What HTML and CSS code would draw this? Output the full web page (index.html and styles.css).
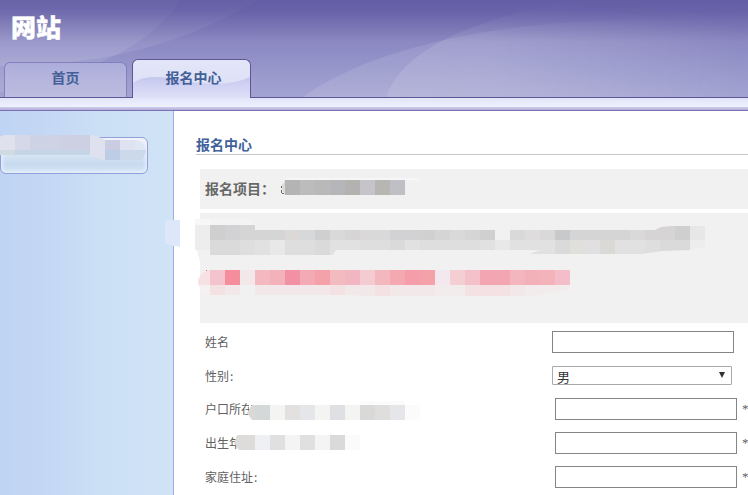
FILE: index.html
```html
<!DOCTYPE html>
<html lang="zh-CN">
<head>
<meta charset="utf-8">
<title>网站</title>
<link rel="stylesheet" href="styles.css">
</head>
<body>
<header class="header">
  <svg class="waves" width="748" height="97" viewBox="0 0 748 97" aria-hidden="true">
    <defs>
      <linearGradient id="up" gradientUnits="userSpaceOnUse" x1="0" y1="8" x2="0" y2="60"><stop offset="0" stop-color="#fff" stop-opacity=".02"/><stop offset="1" stop-color="#fff" stop-opacity=".1"/></linearGradient>
      <linearGradient id="side" gradientUnits="userSpaceOnUse" x1="380" y1="0" x2="748" y2="0"><stop offset="0" stop-color="#fff" stop-opacity=".11"/><stop offset=".3" stop-color="#fff" stop-opacity=".1"/><stop offset="1" stop-color="#fff" stop-opacity="0"/></linearGradient>
      <linearGradient id="fade" gradientUnits="userSpaceOnUse" x1="0" y1="8" x2="0" y2="42"><stop offset="0" stop-color="#fff" stop-opacity=".15"/><stop offset="1" stop-color="#fff"/></linearGradient>
      <mask id="m"><rect width="748" height="97" fill="url(#fade)"/></mask>
    </defs>
    <path fill="url(#up)" d="M0 0H180Q153 41 98 63Q50 82 0 92Z"/>
    <path fill="url(#up)" d="M0 0H258Q170 52 70 62Q35 66 0 66Z"/>
    <g mask="url(#m)">
      <path fill="url(#side)" d="M303 97C350 63 420 42 498 30C580 18 665 17 748 23V97Z"/>
      <path fill="url(#side)" d="M386 97C399 61 440 36 498 19C540 5 560 2 580 0H748V97Z"/>
    </g>
  </svg>
  <h1 class="site">网站</h1>
  <nav class="tabs">
    <a class="tab">首页</a>
    <a class="tab active">
      <svg class="gloss" width="117" height="39" viewBox="0 0 117 39" aria-hidden="true"><defs><linearGradient id="g" x1="0" y1="0" x2="0" y2="1"><stop offset="0" stop-color="#c5c8ee"/><stop offset="1" stop-color="#e0e2f8"/></linearGradient></defs><path fill="url(#g)" d="M0 23C14 14 32 17 52 21C78 26 103 24 117 17V39H0Z"/></svg>
      <span>报名中心</span>
    </a>
  </nav>
</header>
<div class="strip"></div>
<div class="body">
  <aside class="side"><div class="side-item"></div></aside>
  <main class="main">
    <h2 class="title">报名中心</h2>
    <div class="project">报名项目：</div>
    <div class="notice"></div>
    <form class="form">
      <div class="row"><label>姓名</label><input type="text"></div>
      <div class="row pick"><label>性别<em>:</em></label><div class="select"><span>男</span><i></i></div></div>
      <div class="row wide"><label>户口所在</label><input type="text"><b>*</b></div>
      <div class="row wide"><label>出生年</label><input type="text"><b>*</b></div>
      <div class="row wide"><label>家庭住址<em>:</em></label><input type="text"><b>*</b></div>
    </form>
  </main>
</div>
<svg class="mosaic" width="748" height="495" viewBox="0 0 748 495" shape-rendering="crispEdges" aria-hidden="true">
  <defs>
    <clipPath id="c1"><path d="M0 137Q2 135 5 135H90Q97 135 101 138L106 140H137Q145 143 146 150Q145 157 141 160H103L90 155H0Z"/></clipPath>
    <clipPath id="c2"><path d="M195 219H250L255 225V230H655L661 227L671 226H705V247L690 250L662 251L642 254H530L540 250H336L333 255H210V250H195Z"/></clipPath>
    <clipPath id="c3"><path d="M210 270H570V289L550 293L535 296H365L350 295H208Q198 292 198 280Q201 272 210 270Z"/></clipPath>
    <clipPath id="c4"><path d="M252 405H420V420H252L247 413Z"/></clipPath>
    <clipPath id="c5"><path d="M237 435H360V450H239L234 443Z"/></clipPath>
  </defs>
  <g clip-path="url(#c1)">
    <path fill="#dfe2ed" d="M0 135h15v15H0z"/><path fill="#d5d8e8" d="M15 135h15v15H15z"/><path fill="#cdd2e5" d="M30 135h30v15H30z"/><path fill="#cdd0e3" d="M60 135h30v15H60z"/><path fill="#dfe2ee" d="M90 135h15v25H90z"/>
    <path fill="#d0dae3" d="M0 150h15v5H0z"/><path fill="#c5d4e6" d="M15 150h75v5H15z"/>
    <path fill="#cacde2" d="M105 140h15v10h-15z"/><path fill="#dfe2f0" d="M120 135h15v15h-15z"/><path fill="#dfe7f3" d="M135 135h15v15h-15z"/><path fill="#bdcde5" d="M105 150h15v10h-15z"/><path fill="#cbd9ea" d="M120 150h30v10h-30z"/>
  </g>
  <path fill="#dce8fa" d="M165 221L168 220H180V247L165 244Z"/>
  <path fill="#dbdbd8" d="M285 180L281 187L285 195Z"/><path fill="#f6f6f6" d="M284 180L290 178H415L422 180Z"/>
  <path fill="#b4b4b4" d="M285 180h15v15h-15z"/><path fill="#bcbcbc" d="M300 180h15v15h-15z"/><path fill="#b9b9b9" d="M315 180h15v15h-15z"/><path fill="#b5b6b9" d="M330 180h15v15h-15z"/><path fill="#b3b2b1" d="M345 180h15v15h-15z"/><path fill="#c5c5c9" d="M360 180h15v15h-15z"/><path fill="#b8b6b3" d="M375 180h15v15h-15z"/><path fill="#bfc0c6" d="M390 180h15v15h-15z"/>
  <path fill="#6b665e" d="M281 186h1v2h-1zM281 190h1v3h-1zM282 193h2v1h-2z"/>
  <path fill="#f1f1f1" d="M197 250h13v16h-9z"/>
  <g clip-path="url(#c2)">
    <path fill="#f7f7f7" d="M195 219h15v6h-15z"/><path fill="#f4f4f4" d="M210 219h45v6h-45z"/><path fill="#ededed" d="M195 225h15v25h-15z"/>
    <path fill="#cfcfcf" d="M210 225h15v15h-15zM315 230h15v10h-15zM675 226h15v14h-15z"/>
    <path fill="#d2d2d4" d="M225 225h15v15h-15zM390 230h30v10h-30z"/>
    <path fill="#d5d5d5" d="M240 225h45v15h-45zM435 230h15v10h-15zM465 230h15v10h-15zM570 230h60v10h-60z"/>
    <path fill="#dcd8d7" d="M285 230h15v10h-15z"/><path fill="#d6d8da" d="M300 230h15v10h-15z"/>
    <path fill="#d9d9d9" d="M330 230h15v10h-15zM360 230h30v10h-30zM450 230h15v10h-15zM510 230h15v10h-15zM540 230h15v10h-15zM630 230h15v10h-15z"/>
    <path fill="#d6d4d4" d="M345 230h15v10h-15zM645 226h30v14h-30z"/><path fill="#d0d0d1" d="M420 230h15v10h-15zM480 230h15v10h-15z"/>
    <path fill="#dfdcdd" d="M525 230h15v10h-15z"/><path fill="#c8c9ca" d="M555 230h15v10h-15z"/><path fill="#e7e7e7" d="M690 226h15v14h-15z"/>
    <path fill="#dadada" d="M210 240h30v15h-30zM315 240h15v15h-15zM390 240h15v15h-15zM555 240h15v15h-15zM660 240h30v15h-30z"/>
    <path fill="#dedede" d="M240 240h15v15h-15zM285 240h30v15h-30zM360 240h30v15h-30zM420 240h60v15h-60zM645 240h15v15h-15z"/>
    <path fill="#e1e1e1" d="M255 240h15v15h-15zM330 240h30v15h-30zM405 240h15v15h-15zM480 240h15v15h-15zM510 240h45v15h-45zM615 240h30v15h-30z"/>
    <path fill="#e8e8e8" d="M270 240h15v15h-15zM495 240h15v15h-15z"/><path fill="#e0dfdc" d="M570 240h15v15h-15z"/><path fill="#e0e0e3" d="M585 240h15v15h-15z"/><path fill="#dad9d6" d="M600 240h15v15h-15z"/><path fill="#ededed" d="M690 240h15v15h-15z"/>
  </g>
  <g clip-path="url(#c3)">
    <path fill="#f7e1e5" d="M195 270h15v15h-15z"/><path fill="#f4c4ce" d="M210 270h15v15h-15z"/><path fill="#f58d9d" d="M225 270h15v15h-15z"/><path fill="#f3e8e9" d="M240 270h15v15h-15z"/><path fill="#f4b8c0" d="M255 270h15v15h-15z"/><path fill="#f3b2ba" d="M270 270h15v15h-15z"/><path fill="#f291a3" d="M285 270h15v15h-15z"/><path fill="#f3aab5" d="M300 270h15v15h-15z"/><path fill="#f4a1aa" d="M315 270h15v15h-15z"/><path fill="#f3bac0" d="M330 270h15v15h-15z"/><path fill="#f2b6c2" d="M345 270h15v15h-15z"/><path fill="#f3cbd0" d="M360 270h15v15h-15z"/><path fill="#f3b7be" d="M375 270h15v15h-15z"/><path fill="#f4a9b0" d="M390 270h15v15h-15z"/><path fill="#f59dab" d="M405 270h15v15h-15z"/><path fill="#f5a1aa" d="M420 270h15v15h-15z"/><path fill="#f3e8ee" d="M435 270h15v15h-15z"/><path fill="#f3ced3" d="M450 270h15v15h-15z"/><path fill="#f4c0ca" d="M465 270h15v15h-15z"/><path fill="#f3a6b2" d="M480 270h30v15h-30z"/><path fill="#f3b5be" d="M510 270h15v15h-15z"/><path fill="#f4b0b8" d="M525 270h15v15h-15z"/><path fill="#f4b3ba" d="M540 270h15v15h-15z"/><path fill="#f3bdca" d="M555 270h15v15h-15z"/>
    <path fill="#f5f1f2" d="M195 285h15v11h-15z"/><path fill="#f3e1e4" d="M210 285h15v11h-15zM330 285h15v11h-15zM375 285h15v11h-15zM465 285h45v11h-45z"/><path fill="#f3e8e9" d="M225 285h15v11h-15zM255 285h75v11h-75zM345 285h30v11h-30zM390 285h45v11h-45zM510 285h15v11h-15z"/><path fill="#f2eced" d="M435 285h30v11h-30zM525 285h45v11h-45z"/>
  </g>
  <path fill="#ee6040" d="M206 270h1v1h-1z"/>
  <path fill="#fbfbfb" d="M255 402h15v3h-15zM360 401h45v4h-45z"/>
  <g clip-path="url(#c4)">
    <path fill="#dad9d7" d="M245 405h10v15h-10z"/><path fill="#d4d8d9" d="M255 405h15v15h-15z"/><path fill="#f4f4f3" d="M270 405h15v15h-15zM315 405h15v15h-15zM345 405h15v15h-15z"/><path fill="#e3e1df" d="M285 405h15v15h-15z"/><path fill="#e4e6e9" d="M300 405h15v15h-15zM390 405h15v15h-15z"/><path fill="#dfe0e3" d="M330 405h15v15h-15z"/><path fill="#d9d9da" d="M360 405h15v15h-15z"/><path fill="#dfdedc" d="M375 405h15v15h-15z"/><path fill="#fbfbfb" d="M405 405h15v15h-15z"/>
  </g>
  <path fill="#fff" d="M249 400h6v5h-4l-2 5z"/>
  <g clip-path="url(#c5)">
    <path fill="#dddcda" d="M234 435h21v15h-21z"/><path fill="#eff0f3" d="M255 435h15v15h-15z"/><path fill="#e0e0e0" d="M270 435h15v15h-15zM300 435h15v15h-15z"/><path fill="#f4f4f4" d="M285 435h15v15h-15zM315 435h15v15h-15z"/><path fill="#dadada" d="M330 435h15v15h-15z"/><path fill="#fbfbfb" d="M345 435h15v15h-15z"/>
  </g>
</svg>
</body>
</html>
```

FILE: styles.css
```css
* { box-sizing: border-box; }
body {
  margin: 0;
  width: 748px;
  height: 495px;
  overflow: hidden;
  position: relative;
  background: #fff;
  color: #606060;
  font: 12px/18px "Noto Sans CJK SC", sans-serif;
}
.header {
  position: relative;
  height: 98px;
  padding: 9px 4px 0;
  border-bottom: 1px solid #5d5697;
  background: linear-gradient(#625da5 0, #6864aa 12px, #7d79b7 30px, #8b88c2 42px, #9191c8 58px, #a4a4d2 97px);
}
.waves { position: absolute; left: 0; top: 0; }
.site {
  position: relative;
  height: 50px;
  margin: 0 0 0 7px;
  color: #fff;
  font-size: 25px;
  line-height: 35px;
  font-weight: 900;
  -webkit-text-stroke: .4px #fff;
}
.tabs {
  position: relative;
  display: flex;
  align-items: flex-end;
  gap: 5px;
  height: 38px;
}
.tab {
  width: 123px;
  height: 35px;
  padding-top: 4px;
  border: 1px solid #8280bd;
  border-bottom: 0;
  border-radius: 6px 6px 0 0;
  background: linear-gradient(#adaddb, #bdbde1);
  color: #446096;
  font-size: 14px;
  line-height: 20px;
  font-weight: 700;
  text-align: center;
}
.tab.active {
  position: relative;
  width: 119px;
  height: 39px;
  margin-bottom: -1px;
  padding: 7px 0 0 4px;
  border-color: #5d5697;
  background: linear-gradient(#e3e6f8, #dcdff5);
  overflow: hidden;
}
.gloss { position: absolute; left: 0; top: 0; }
.tab.active span { position: relative; }
.strip {
  height: 13px;
  border-bottom: 1px solid #7c70b2;
  background: linear-gradient(#e2e5f9 0, #f0f1fe 9px, #c9c9e7 9px, #c9c9e7 10px, #b7b4dc 11px, #b7b4dc 12px);
}
.body { display: flex; height: 384px; }
.side {
  width: 174px;
  flex: none;
  padding-top: 26px;
  border-right: 1px solid #9bb0e8;
  background: linear-gradient(90deg, #bfd3f4, #c5d9f5 55px, #cce0f5 110px, #d0e3f7);
}
.side-item {
  width: 148px;
  height: 37px;
  border: 1px solid #929fda;
  border-radius: 6px;
  background: linear-gradient(#f5f0fa 0, #dce8f5 14px, #c7daf0 26px, #d4e4f6);
  box-shadow: inset 0 0 4px 1px #edf4fd;
}
.main { flex: 1; min-width: 0; padding: 24px 0 0 22px; }
.title {
  height: 20px;
  margin: 0;
  border-bottom: 1px solid #c5c5c5;
  color: #41619d;
  font-size: 14px;
  line-height: 18px;
  font-weight: 700;
}
.project {
  height: 40px;
  margin: 14px 0 4px 4px;
  padding-left: 5px;
  background: #f1f1f1;
  color: #686868;
  font-size: 14px;
  line-height: 39px;
  font-weight: 700;
}
.notice { height: 110px; margin-left: 4px; background: #f1f1f1; }
.form { margin: 2px 0 0 9px; }
.row { display: flex; align-items: center; height: 34px; }
.row.pick { height: 33px; }
.row label { width: 347px; flex: none; }
.row.wide label { width: 350px; }
.row em { margin-left: 1px; font-style: normal; }
.row input {
  width: 182px;
  height: 22px;
  flex: none;
  margin: 0;
  padding: 0;
  border: 1px solid #858585;
  background: #fff;
}
.row b { margin-left: 5px; flex: none; font: 13px/18px "Liberation Serif", serif; }
.select {
  display: flex;
  align-items: center;
  justify-content: space-between;
  width: 180px;
  height: 19px;
  padding: 0 6px 0 4px;
  border: 1px solid #a9a9a9;
  border-radius: 1px;
  color: #333;
  font-size: 13px;
}
.select span { line-height: 19px; padding-top: 1px; }
.select i {
  width: 0;
  height: 0;
  margin-bottom: 1px;
  border: 3px solid transparent;
  border-top: 6px solid #333;
  border-bottom: 0;
}
.mosaic { position: absolute; left: 0; top: 0; pointer-events: none; }
```
